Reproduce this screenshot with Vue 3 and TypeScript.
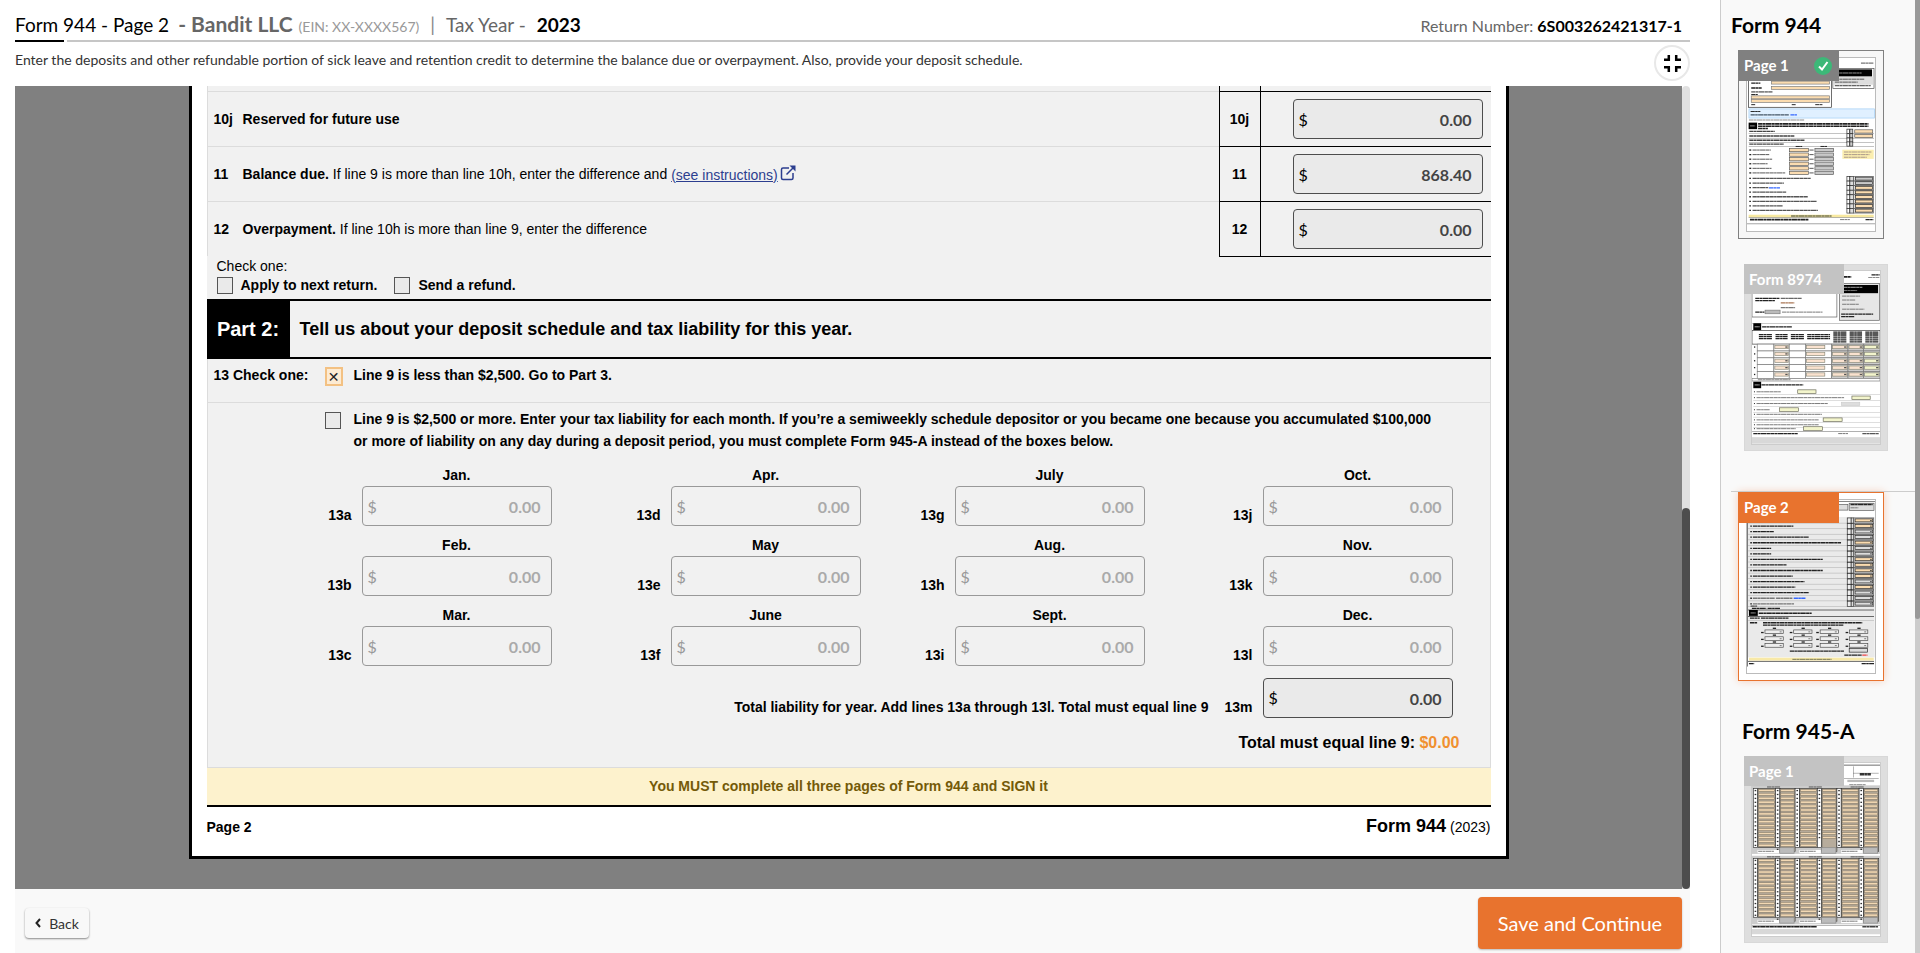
<script setup lang="ts">
import { reactive, ref } from 'vue'

interface Line { code: string; strong: string; text: string; link?: string; value: string }
interface Month { code: string; name: string; value: string }
type Box = [number, number, number, number, string, string?]
type Ink = [number, number, number, number, string]
interface Thumb { label: string; view: string; boxes: Box[]; inks: Ink[] }

const lines = reactive<Line[]>([
  { code: '10j', strong: 'Reserved for future use', text: '', value: '0.00' },
  { code: '11', strong: 'Balance due.', text: 'If line 9 is more than line 10h, enter the difference and', link: '(see instructions)', value: '868.40' },
  { code: '12', strong: 'Overpayment.', text: 'If line 10h is more than line 9, enter the difference', value: '0.00' },
])

const names = ['Jan.', 'Apr.', 'July', 'Oct.', 'Feb.', 'May', 'Aug.', 'Nov.', 'Mar.', 'June', 'Sept.', 'Dec.']
const codes = ['13a', '13d', '13g', '13j', '13b', '13e', '13h', '13k', '13c', '13f', '13i', '13l']
const months = reactive<Month[]>(names.map((name, i) => ({ code: codes[i], name, value: '0.00' })))
const total = ref('0.00')
const applyNext = ref(false)
const refund = ref(false)
const under = ref(true)
const over = ref(false)

const K = '#222'
const TAN = '#fbdcb0'
const GREY = '#c9c9c9'

function pageOne(): Thumb {
  const boxes: Box[] = [
    [112, 180, 254, 140, '#fff', K], [182, 240, 178, 9, TAN, '#777'], [182, 256, 178, 9, TAN, '#777'],
    [120, 285, 240, 9, TAN, '#777'], [120, 296, 240, 9, TAN, '#777'],
    [370, 201, 126, 61, '#fff', '#444'], [373, 204, 117, 22, '#000'], [373, 226, 121, 25, '#ddd'],
    [113, 325, 384, 28, '#e0f0ff', '#9ccbf4'], [112, 367, 26, 20, '#000'],
    [399, 450, 96, 28, '#fbeeb0'], [112, 649, 383, 8, '#f8e9a0'], [112, 658, 383, 1, K], [107, 676, 392, 2, '#777'],
  ]
  const inks: Ink[] = [
    [456, 185, 38, 4, '#777'], [378, 215, 80, 3, '#999'], [376, 234, 90, 3, '#555'], [376, 243, 70, 3, '#555'], [376, 254, 110, 3, '#333'],
    [120, 246, 28, 4, K], [120, 261, 32, 4, K], [120, 273, 66, 3, K], [120, 281, 20, 3, K], [120, 312, 12, 3, K], [244, 312, 12, 3, K], [316, 312, 22, 3, K],
    [118, 333, 30, 3, K], [118, 343, 118, 4, '#456'], [240, 343, 20, 4, '#36f'], [113, 359, 170, 3, '#888'],
    [116, 377, 16, 4, '#777'], [141, 371, 338, 5, K], [141, 378, 338, 5, K], [141, 385, 30, 4, K],
    [256, 440, 20, 3, K], [332, 440, 20, 3, K], [404, 457, 84, 3, '#a98'], [404, 465, 78, 3, '#a98'], [404, 473, 70, 3, '#a98'],
    [242, 653, 124, 4, '#775'], [116, 664, 180, 5, K], [392, 664, 30, 3, '#777'], [470, 664, 24, 4, K],
  ]
  ;[394, 408, 421, 433].forEach((y, i) => {
    inks.push([114, y, [78, 138, 170, 106][i], 4, '#444'])
    boxes.push([112, y + 6, 384, 1, '#444'])
    boxes.push([413, y - 7, 8, 13, '#fff', K], [422, y - 7, 9, 13, '#ccc', K])
    if (i < 2) boxes.push([437, y - 5, 55, 10, TAN, '#555'])
  })
  for (let i = 0; i < 6; i++) {
    const y = 446 + i * 14
    boxes.push([237, y, 58, 10, TAN, '#555'], [315, y, 57, 10, GREY, '#555'])
    inks.push([114, y + 5, 6, 4, K], [124, y + 5, [56, 52, 60, 46, 58, 100][i], 3, '#555'], [298, y + 5, 14, 3, '#555'])
  }
  for (let i = 0; i < 8; i++) {
    const y = 532 + i * 14
    boxes.push([413, y, 9, 14, '#fff', K], [422, y, 11, 14, '#ddd', K], [433, y, 61, 14, '#ddd', '#555'])
    boxes.push([439, y + 2, 52, 9, i === 0 || i === 1 ? GREY : TAN, K])
    inks.push([114, y + 6, 5, 4, K], [124, y + 6, [178, 96, 48, 104, 170, 196, 92, 200][i], 4, '#555'])
  }
  inks.push([174, 567, 34, 4, '#36f'])
  return { label: 'Page 1', view: '107 172 392 524', boxes, inks }
}

function pageCredit(): Thumb {
  const boxes: Box[] = [
    [122, 110, 260, 89, '#fff', '#555'], [390, 96, 122, 113, '#e6e6e6', '#555'], [392, 101, 116, 25, '#000'],
    [162, 178, 46, 11, '#bbb', '#777'], [122, 218, 392, 1, '#555'], [126, 218, 24, 22, '#000'],
    [122, 240, 392, 42, '#fff', '#333'], [126, 397, 24, 20, '#000'], [122, 550, 392, 1, '#333'], [120, 567, 394, 20, '#d8d8d8'],
  ]
  const inks: Ink[] = [
    [402, 76, 24, 5, K], [488, 70, 25, 4, K], [478, 78, 34, 3, '#888'], [400, 108, 60, 3, '#aaa'], [400, 118, 44, 3, '#777'],
    [132, 142, 74, 4, K], [132, 149, 60, 4, K], [210, 142, 64, 4, '#666'], [210, 156, 42, 4, '#a75'], [210, 170, 44, 4, '#777'],
    [132, 184, 28, 4, K], [214, 184, 124, 3, '#777'], [398, 135, 55, 3, '#777'], [398, 147, 40, 3, '#777'], [398, 160, 52, 3, '#777'], [398, 175, 68, 3, '#777'],
    [395, 190, 98, 4, K], [395, 198, 40, 4, K], [130, 229, 16, 3, '#aaa'], [153, 229, 91, 4, K],
    [130, 407, 16, 3, '#aaa'], [151, 407, 128, 4, K], [126, 556, 136, 4, K], [386, 556, 30, 3, '#777'], [460, 556, 50, 4, '#555'],
  ]
  const cols = [138, 189, 236, 286, 366, 416, 464, 514]
  for (let c = 0; c < 7; c++) {
    const w = cols[c + 1] - cols[c]
    for (let r = 0; r < (c > 3 ? 6 : 3); r++) inks.push([cols[c] + 5, (c > 3 ? 245 : 253) + r * 6, w - 10, 4, K])
  }
  for (let r = 0; r < 5; r++) {
    const y = 282 + r * 21
    inks.push([128, y + 9, 4, 4, K])
    for (let c = 0; c < 7; c++) {
      const x = cols[c]
      const w = cols[c + 1] - x
      boxes.push([x, y, w, 21, c > 3 ? '#ccc' : '#fff', '#777'])
      if (c !== 0 && c !== 2) boxes.push([x + 3, y + 4, c === 3 ? 56 : w - 6, 10, c > 5 ? '#f3f5cc' : '#fae2cf', '#887'])
      if (c === 1 || c > 3) inks.push([x + w - 12, y + 9, 7, 4, '#555'])
    }
  }
  boxes.push([122, 387, 392, 8, '#fff', '#777'])
  inks.push([140, 391, 100, 3, '#888'])
  const ys = [428, 446, 464, 483, 497, 514, 529, 541]
  const widths = [75, 268, 218, 40, 200, 190, 190, 120]
  ys.forEach((y, i) => {
    inks.push([128, y, 3, 3, K], [136, y, widths[i], 3, '#777'])
    boxes.push([126, y + 8, 388, 1, '#999'])
  })
  boxes.push([262, 422, 56, 11, '#f3f5cc', '#665'], [428, 441, 56, 11, '#f3f5cc', '#665'], [396, 460, 56, 10, '#ddd', '#ccc'],
    [206, 477, 58, 11, '#f3f5cc', '#665'], [340, 508, 58, 11, '#f3f5cc', '#665'], [280, 535, 58, 11, '#f3f5cc', '#665'])
  return { label: 'Form 8974', view: '122 62 392 522', boxes, inks }
}

function pageTwo(): Thumb {
  const boxes: Box[] = [
    [107, 88, 392, 2, '#444'], [110, 136, 388, 430, '#eaeaea'], [350, 98, 66, 17, '#ddd', '#555'], [420, 94, 76, 22, '#ddd', '#555'],
    [110, 420, 386, 2, K], [113, 421, 27, 18, '#000'], [110, 440, 386, 2, K], [110, 453, 386, 1, '#888'],
    [113, 567, 382, 9, '#f8e9a8'], [110, 577, 386, 2, K], [107, 88, 2, 506, '#333'],
  ]
  const inks: Ink[] = [
    [424, 98, 68, 5, K], [424, 108, 24, 3, '#777'], [118, 409, 20, 3, K], [122, 416, 44, 4, K], [170, 416, 38, 4, K],
    [118, 430, 16, 3, '#999'], [143, 431, 162, 5, K], [116, 446, 30, 4, K], [150, 446, 84, 4, K],
    [116, 460, 22, 4, K], [156, 460, 304, 4, K], [156, 467, 246, 4, K], [238, 547, 166, 4, K],
    [405, 559, 54, 4, K], [460, 559, 16, 4, '#e44'], [246, 572, 120, 3, '#775'], [113, 585, 16, 4, K], [458, 585, 38, 4, K],
  ]
  const widths = [130, 124, 64, 172, 270, 56, 56, 214, 104, 214, 122, 158, 130, 172, 68, 126]
  widths.forEach((w, i) => {
    const y = 139 + i * 17
    boxes.push([110, y + 15, 306, 2, '#bbb'], [414, y, 12, 16, '#eee', K], [426, y, 8, 16, '#ddd', K], [434, y, 61, 16, '#ddd', '#555'])
    boxes.push([438, y + 3, 54, 9, [0, 1, 4, 7, 8, 9, 10, 12].includes(i) ? TAN : '#ddd', K])
    inks.push([117, y + 8, 5, 4, K], [125, y + 8, w, 4, i > 13 ? '#777' : K], [484, y + 8, 5, 3, '#444'])
  })
  inks.push([196, 385, 50, 4, '#777'], [250, 385, 36, 4, '#36f'])
  for (let r = 0; r < 3; r++) {
    [162, 250, 331, 421].forEach((x) => {
      const y = 482 + r * 21
      boxes.push([x, y, 56, 11, '#eee', '#444'])
      inks.push([x - 12, y + 8, 8, 4, K], [x + 24, y - 5, 10, 4, K], [x + 45, y + 6, 6, 3, '#777'])
    })
  }
  boxes.push([420, 539, 56, 11, '#ddd', K])
  return { label: 'Page 2', view: '107 88 392 522', boxes, inks }
}

function pageLedger(): Thumb {
  const boxes: Box[] = [
    [122, 189, 392, 2, K], [432, 194, 1, 34, K], [432, 214, 78, 1, K], [414, 235, 82, 7, '#bbb'], [402, 230, 108, 1, K],
    [122, 252, 392, 212, '#ccc'], [122, 467, 392, 212, '#ccc'], [122, 462, 392, 5, '#fff'],
    [122, 678, 392, 14, '#fff'], [122, 680, 392, 1, K], [122, 692, 392, 16, '#d8d8d8'],
  ]
  const inks: Ink[] = [[452, 218, 34, 7, '#333'], [420, 250, 50, 3, '#888'], [124, 685, 196, 4, K], [460, 685, 48, 4, '#444']]
  const xs = [126, 194, 254, 322, 382, 450]
  for (let b = 0; b < 2; b++) {
    const top = 262 + b * 214
    xs.forEach((x, c) => {
      const w = (xs[c + 1] ?? 510) - x
      const n = c % 2 ? 16 : 15
      boxes.push([x, top, 13, 180, '#fff', '#333'], [x + 14, top, w - 14, n * 12, '#b7ac9c', '#333'])
      for (let r = 0; r < n; r++) {
        if (b === 0 && c === 3 && r > 12) continue
        boxes.push([x + 16, top + 2 + r * 12, w - 19, 7, '#f2d8b3', '#887d6c'])
        inks.push([x + 4, top + 6 + r * 12, 5, 4, '#333'])
      }
    })
    for (let c = 0; c < 3; c++) {
      boxes.push([xs[c * 2] + 13, top + 188, 66, 10, '#fff'], [xs[c * 2 + 1] + 13, top + 181, 44, 17, '#bbb', '#888'])
      inks.push([xs[c * 2] + 15, top + 192, 48, 3, '#777'], [xs[c * 2] + 42, top - 5, 40, 3, '#555'])
    }
  }
  return { label: 'Page 1', view: '122 188 392 521', boxes, inks }
}

const groups: { title: string; thumbs: (Thumb & { kind: string })[] }[] = [
  { title: 'Form 944', thumbs: [{ ...pageOne(), kind: 'done' }, { ...pageCredit(), kind: 'muted' }, { ...pageTwo(), kind: 'current' }] },
  { title: 'Form 945-A', thumbs: [{ ...pageLedger(), kind: 'muted' }] },
]
</script>

<template>
  <div class="shell">
    <main class="work">
      <header class="top">
        <h1 class="title">Form 944 - Page 2</h1>
        <strong class="company">- Bandit LLC</strong>
        <span class="ein">(EIN: XX-XXXX567)</span>
        <span class="bar">|</span>
        <span class="year">Tax Year -</span>
        <strong class="year-value">2023</strong>
        <span class="return">Return Number: <strong>6S003262421317-1</strong></span>
      </header>
      <div class="rule"><span></span><i></i></div>
      <div class="intro">
        <p>Enter the deposits and other refundable portion of sick leave and retention credit to determine the balance due or overpayment. Also, provide your deposit schedule.</p>
        <button class="shrink" type="button" aria-label="Exit full screen">
          <svg viewBox="0 0 17 17" width="17" height="17"><path d="M0 4.800H4.800V0M12.200 0V4.800H17M0 12.200H4.800V17M12.200 17V12.200H17" /></svg>
        </button>
      </div>

      <section class="canvas">
        <div class="stage">
          <div class="paper">
            <div class="line stub"><div class="desc"></div><div class="num"></div><div class="cell"></div></div>
            <div v-for="l in lines" :key="l.code" class="line">
              <div class="desc">
                <b class="code">{{ l.code }}</b>
                <label :for="'line-' + l.code"><b>{{ l.strong }}</b> {{ l.text }}</label>
                <a v-if="l.link" href="#">{{ l.link }}<svg viewBox="0 0 16 16" width="16" height="16"><path d="M9 3H3Q1.500 3 1.500 4.500V13Q1.500 14.500 3 14.500H11.500Q13 14.500 13 13V8M6.500 9.500L13.500 2.500" /><path class="tip" d="M9.500 .5H15.500V6.500Z" /></svg></a>
              </div>
              <div class="num">{{ l.code }}</div>
              <div class="cell">
                <div class="money"><span>$</span><input :id="'line-' + l.code" v-model="l.value" readonly /></div>
              </div>
            </div>

            <div class="choice">
              <div>Check one:</div>
              <div class="choice-row">
                <label><input v-model="applyNext" class="tick" type="checkbox" /><b>Apply to next return.</b></label>
                <label><input v-model="refund" class="tick" type="checkbox" /><b>Send a refund.</b></label>
              </div>
            </div>

            <div class="part"><h2>Part 2:</h2><h3>Tell us about your deposit schedule and tax liability for this year.</h3></div>

            <div class="schedule">
              <div class="option first">
                <b>13 Check one:</b>
                <input id="under" v-model="under" class="tick" type="checkbox" />
                <label for="under">Line 9 is less than $2,500. Go to Part 3.</label>
              </div>
              <div class="option second">
                <b></b>
                <input id="over" v-model="over" class="tick" type="checkbox" />
                <label for="over">Line 9 is $2,500 or more. Enter your tax liability for each month. If you’re a semiweekly schedule depositor or you became one because you accumulated $100,000 or more of liability on any day during a deposit period, you must complete Form 945-A instead of the boxes below.</label>
              </div>
              <div class="months">
                <div v-for="m in months" :key="m.code" class="month">
                  <label :for="m.code" class="name">{{ m.name }}</label>
                  <span class="mcode">{{ m.code }}</span>
                  <div class="money off"><span>$</span><input :id="m.code" v-model="m.value" disabled /></div>
                </div>
              </div>
              <div class="sum">
                <label for="total">Total liability for year. Add lines 13a through 13l. Total must equal line 9</label>
                <span>13m</span>
                <div class="money"><span>$</span><input id="total" v-model="total" readonly /></div>
              </div>
              <div class="check">Total must equal line 9: <em>$0.00</em></div>
            </div>
            <div class="notice">You MUST complete all three pages of Form 944 and SIGN it</div>
            <div class="foot"><b>Page 2</b><span><b>Form 944</b> (2023)</span></div>
          </div>
        </div>
        <div class="track"><div class="grip"></div></div>
      </section>

      <footer class="actions">
        <button class="back" type="button">
          <svg viewBox="0 0 6 10" width="6" height="10"><path d="M5 1L1.500 5L5 9" /></svg>Back
        </button>
        <button class="save" type="button">Save and Continue</button>
      </footer>
    </main>

    <aside class="side">
      <nav class="list" aria-label="Pages">
        <section v-for="g in groups" :key="g.title" class="group">
          <h2>{{ g.title }}</h2>
          <a v-for="t in g.thumbs" :key="t.label" href="#" class="thumb" :class="t.kind">
            <svg class="sheet" :viewBox="t.view">
              <rect v-for="(b, i) in t.boxes" :key="i" :x="b[0]" :y="b[1]" :width="b[2]" :height="b[3]" :fill="b[4]" :stroke="b[5] ?? 'none'" stroke-width="2" />
              <line v-for="(n, i) in t.inks" :key="'n' + i" :x1="n[0]" :y1="n[1]" :x2="n[0] + n[2]" :y2="n[1]" :stroke="n[4]" :stroke-width="n[3]" stroke-dasharray="13 1 8 1 17 1 10 1" />
            </svg>
            <span class="tag">{{ t.label }}
              <svg v-if="t.kind === 'done'" viewBox="0 0 18 18" width="18" height="18"><circle cx="9" cy="9" r="9" /><path d="M5 9.500L8 12.500L13.500 5" /></svg>
            </span>
          </a>
        </section>
      </nav>
      <div class="side-track"><div></div></div>
    </aside>
  </div>
</template>

<style>
body { margin: 0; }
</style>

<style scoped>
* { box-sizing: border-box; }
.shell { display: flex; height: 100vh; overflow: hidden; background: #fff; color: #000; font-family: Lato, "Open Sans", sans-serif; }
h1, h2, h3, p { margin: 0; }
button, input { font-family: inherit; }
.work { flex: 1; min-width: 0; display: flex; flex-direction: column; padding: 0 30px 0 15px; }
.top { display: flex; align-items: baseline; height: 40px; padding: 10px 8px 0 0; line-height: 28px; font-size: 19px; color: #666; white-space: nowrap; }
.title { font-size: 19px; font-weight: 400; color: #000; }
.company { margin-left: 9px; font-size: 21px; }
.ein { margin-left: 6px; font-size: 14px; color: #999; }
.bar { margin-left: 11px; color: #888; }
.year { margin-left: 11px; }
.year-value { margin-left: 11px; color: #000; }
.return { margin-left: auto; font-size: 16px; }
.return strong { color: #000; }
.rule { display: flex; gap: 3px; height: 2px; }
.rule span { width: 49px; background: #000; }
.rule i { flex: 1; background: #c6c6c6; }
.intro { display: flex; justify-content: space-between; align-items: flex-start; height: 44px; padding-top: 3px; }
.intro p { padding-top: 5px; font-size: 14px; line-height: 20px; color: #333; }
.shrink { display: grid; place-items: center; width: 36px; height: 36px; padding: 0; border: 2px solid #e8e8e8; border-radius: 50%; background: #fff; }
.shrink path { fill: none; stroke: #000; stroke-width: 2.5; }
.canvas { flex: 1; min-height: 0; display: flex; }
.stage { flex: 1; overflow: hidden; background: #808080; }
.track { width: 8px; display: flex; flex-direction: column; justify-content: flex-end; background: #e0e0e0; border-radius: 4px 4px 0 0; }
.grip { height: 47.5%; background: #4d4d4d; border-radius: 4px; }
.paper { max-width: 1320px; margin: 0 auto; padding: 0 15px; border: solid #000; border-width: 0 3px 3px; background: #fff; font-family: "Liberation Sans", Arial, sans-serif; font-size: 14px; }
.line { display: grid; grid-template-columns: 1fr 41px 231px; height: 55px; background: #f1f1f1; }
.line.stub { height: 5px; }
.desc { display: flex; align-items: center; padding-left: 6px; border-left: 1px solid #dcdcdc; border-top: 1px solid #dcdcdc; }
.num { display: grid; place-items: center; border-left: 1px solid #000; border-top: 1px solid #000; font-weight: 700; }
.cell { display: flex; align-items: center; justify-content: flex-end; padding-right: 8px; border-left: 1px solid #000; border-top: 1px solid #000; }
.line.stub > div { border-top: 0; }
.code { width: 29px; }
.desc a { margin-left: 4px; color: #2c3e8f; }
.desc a svg { vertical-align: -1px; margin-left: 2px; }
.desc path { fill: none; stroke: #2c3e8f; stroke-width: 1.5; }
.desc .tip { fill: #2c3e8f; stroke: none; }
.money { display: flex; align-items: center; width: 190px; height: 40px; padding: 0 10px 0 5px; border: 1px solid #4d4d4d; border-radius: 4px; background: #eaeaea; font-family: Lato, sans-serif; font-size: 16px; }
.money input { flex: 1; min-width: 0; padding: 0; border: 0; outline: 0; background: none; text-align: right; font-size: 16px; font-weight: 700; color: #444; }
.money.off { border-color: #999; background: #f1f1f1; color: #999; }
.money.off input { color: #aaa; }
.choice { height: 43px; padding: 1px 10px; background: linear-gradient(#000, #000) right top / 272px 1px no-repeat #f1f1f1; line-height: 18px; }
.choice-row { display: flex; gap: 17px; }
.choice label { display: flex; align-items: center; gap: 8px; height: 20px; }
.tick { appearance: none; display: grid; place-items: center; flex: none; width: 16px; height: 17px; margin: 0; border: 1px solid #555; background: #eaeaea; }
.tick:checked { width: 18px; height: 19px; border: 2px solid #f3c183; background: #fdebd3; }
.tick:checked::before { content: "✕"; font: 700 14px/14px "DejaVu Sans", sans-serif; color: #222; }
.part { display: flex; height: 60px; border: solid #000; border-width: 2px 0; background: #f1f1f1; line-height: 56px; }
.part h2 { width: 83px; background: #000; color: #fff; text-align: center; font-size: 20px; }
.part h3 { margin-left: 10px; font-size: 18px; }
.schedule { border: 1px solid #dcdcdc; border-top: 0; background: #f1f1f1; font-weight: 700; }
.option { display: grid; grid-template-columns: 111px 29px 1fr; padding: 5px 50px 0 6px; line-height: 22px; }
.option .tick { margin-top: 4px; }
.first { height: 44px; border-bottom: 1px solid #dcdcdc; }
.option.first .tick { margin-top: 3px; }
.second { padding-bottom: 12px; }
.months { display: grid; grid-template-columns: 344fr 309fr 284fr 308fr; row-gap: 8px; padding-right: 37px; }
.month { display: grid; grid-template-columns: 1fr 190px; column-gap: 10px; }
.name { grid-column: 2; text-align: center; line-height: 22px; }
.mcode { align-self: end; text-align: right; line-height: 22px; }
.months .money, .sum .money { font-weight: 400; }
.sum { display: flex; align-items: flex-end; justify-content: flex-end; margin-top: 12px; padding-right: 37px; line-height: 22px; }
.sum > span { margin: 0 10px 0 16px; }
.check { padding: 14px 30px 13px 0; text-align: right; font-size: 16px; line-height: 22px; }
.check em { font-style: normal; color: #f09030; }
.notice { height: 39px; border-bottom: 2px solid #000; background: #fdf2cd; color: #745a08; text-align: center; font-weight: 700; line-height: 37px; }
.foot { display: flex; justify-content: space-between; align-items: baseline; height: 49px; line-height: 38px; }
.foot span b { font-size: 18px; }
.actions { display: flex; justify-content: space-between; align-items: center; height: 64px; padding: 4px 8px 0 10px; background: #f9f9f9; }
.back { display: flex; align-items: center; justify-content: center; gap: 8px; width: 64px; height: 30px; padding: 0; border: 0; border-radius: 4px; background: #f8f8f8; box-shadow: 0 1px 2px #888; font-size: 14px; color: #333; }
.back path { fill: none; stroke: #222; stroke-width: 2; }
.save { width: 204px; height: 52px; border: 0; border-radius: 4px; background: #e8732e; box-shadow: 0 1px 2px #bbb; color: #fff; font-size: 20px; }
.side { flex: 0 0 200px; display: flex; border-left: 1px solid #ccc; background: #f9f9f9; }
.list { flex: 1; overflow: hidden; }
.group { display: flex; flex-direction: column; }
.group h2 { padding: 11px 0 11px 10px; font-size: 21px; line-height: 28px; }
.thumb { position: relative; display: block; width: 146px; margin-left: 17px; padding: 6px 7px; border: 1px solid #808080; background: #fff; text-decoration: none; color: #fff; }
.sheet { display: block; width: 130px; height: 175px; border: 1px solid #bbb; background: #fff; }
.thumb.done { background: #f7f7f7; }
.tag { position: absolute; top: -1px; left: -1px; display: flex; align-items: center; justify-content: space-between; width: 101px; height: 31px; padding: 0 7px 0 6px; background: #808080; font-size: 15px; font-weight: 700; line-height: 31px; white-space: nowrap; }
.tag circle { fill: #3cb878; }
.tag path { fill: none; stroke: #fff; stroke-width: 2; }
.thumb.muted { width: 144px; margin: 25px 0 0 23px; border-color: #d8d8d8; background: #dedede; padding: 5px 6px; }
.muted .sheet { border-color: #ccc; }
.muted .tag { width: 100px; height: 30px; padding-left: 5px; background: #c3c3c3; }
.thumb.current { margin-top: 41px; border-color: #e8732e; box-shadow: 0 0 8px #f6cdb8; }
.thumb.current::before { content: ""; position: absolute; top: -2px; left: -8px; width: 184px; height: 1px; background: #ccc; }
.current .tag { background: #e8732e; }
.group + .group h2 { padding: 36px 0 11px 21px; }
.group + .group .thumb { margin-top: 0; }
.side-track { width: 5px; background: #ccc; }
.side-track div { height: 65%; background: #999; border-radius: 0 0 3px 3px; }
</style>
